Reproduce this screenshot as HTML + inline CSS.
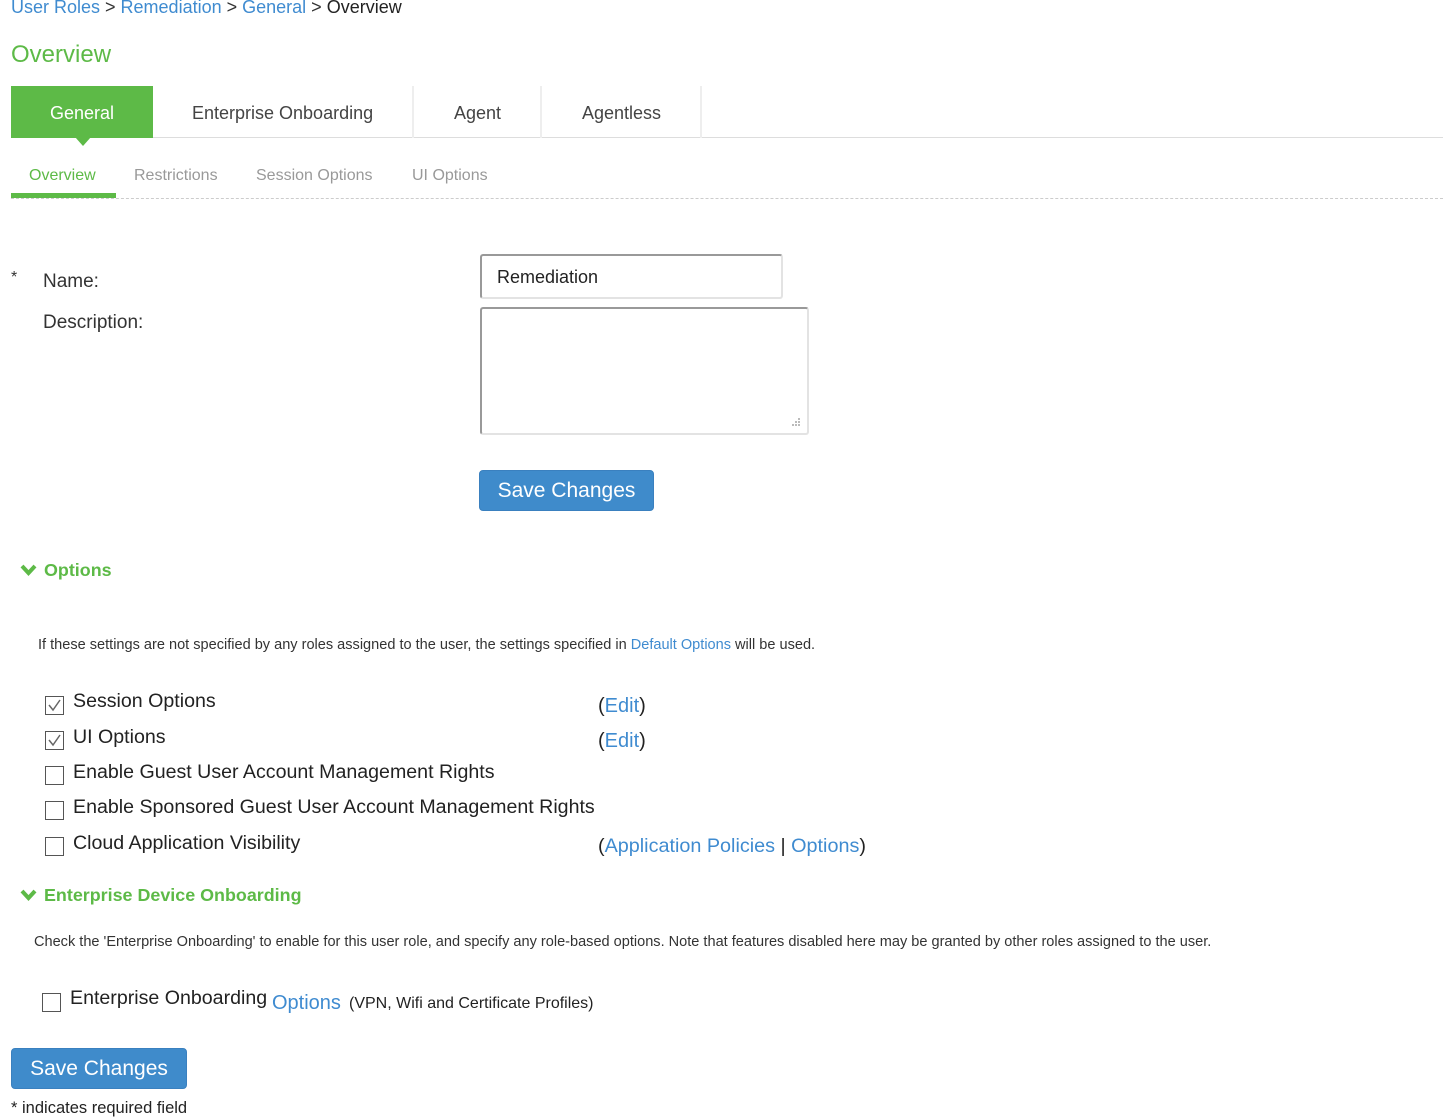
<!DOCTYPE html>
<html><head><meta charset="utf-8"><style>
*{margin:0;padding:0;box-sizing:border-box}
body{width:1443px;height:1115px;overflow:hidden;background:#fff;font-family:"Liberation Sans",Arial,sans-serif;color:#333;position:relative}
.a{position:absolute;white-space:nowrap;line-height:1}
.lk{color:#3f8bd0}
.g{color:#5dba47}
.cb{position:absolute;width:19px;height:19px;border:1.5px solid #555;background:#fff}
.cb svg{position:absolute;left:1px;top:1px}
.btn{position:absolute;background:#3f8bcb;border:1px solid #3a80bf;border-radius:4px;color:#fff;font-size:21px;text-align:center;line-height:40px}
</style></head><body>
<div class="a" style="left:11px;top:-2px;font-size:18px"><span class="lk">User Roles</span> &gt; <span class="lk">Remediation</span> &gt; <span class="lk">General</span> &gt; <span style="color:#222">Overview</span></div>
<div class="a g" style="left:11px;top:43px;font-size:24px">Overview</div>

<div style="position:absolute;left:11px;top:137px;width:1432px;height:1px;background:#ddd"></div>
<div style="position:absolute;left:11px;top:86px;width:142px;height:52px;background:#5dba47"></div>
<div style="position:absolute;left:75px;top:137px;width:0;height:0;border-left:8px solid transparent;border-right:8px solid transparent;border-top:9px solid #5dba47"></div>
<div style="position:absolute;left:412px;top:86px;width:2px;height:52px;background:#eee"></div>
<div style="position:absolute;left:540px;top:86px;width:2px;height:52px;background:#eee"></div>
<div style="position:absolute;left:700px;top:86px;width:2px;height:52px;background:#eee"></div>
<div class="a" style="left:50px;top:104px;font-size:18px;color:#fff">General</div>
<div class="a" style="left:192px;top:104px;font-size:18px;color:#444">Enterprise Onboarding</div>
<div class="a" style="left:454px;top:104px;font-size:18px;color:#444">Agent</div>
<div class="a" style="left:582px;top:104px;font-size:18px;color:#444">Agentless</div>

<div class="a g" style="left:29px;top:168px;font-size:16px">Overview</div>
<div class="a" style="left:134px;top:168px;font-size:16px;color:#999">Restrictions</div>
<div class="a" style="left:256px;top:168px;font-size:16px;color:#999">Session Options</div>
<div class="a" style="left:412px;top:168px;font-size:16px;color:#999">UI Options</div>
<div style="position:absolute;left:11px;top:198px;width:1432px;border-top:1px dashed #ccc"></div>
<div style="position:absolute;left:11px;top:193px;width:105px;height:5px;background:#5dba47"></div>

<div class="a" style="left:11px;top:270px;font-size:16px">*</div>
<div class="a" style="left:43px;top:272px;font-size:19px">Name:</div>
<div class="a" style="left:43px;top:313px;font-size:19px">Description:</div>
<div style="position:absolute;left:480px;top:254px;width:303px;height:45px;border:2px solid #e3e3e3;border-top-color:#999;border-left-color:#999;border-radius:3px"></div>
<div class="a" style="left:497px;top:268px;font-size:18px;color:#222">Remediation</div>
<div style="position:absolute;left:480px;top:307px;width:329px;height:128px;border:2px solid #e3e3e3;border-top-color:#999;border-left-color:#999;border-radius:3px"></div>
<svg style="position:absolute;left:789px;top:417px" width="14" height="12"><g fill="#bbb"><rect x="9" y="1" width="2" height="2"/><rect x="6" y="4" width="2" height="2"/><rect x="9" y="4" width="2" height="2"/><rect x="3" y="7" width="2" height="2"/><rect x="6" y="7" width="2" height="2"/><rect x="9" y="7" width="2" height="2"/></g></svg>
<div class="btn" style="left:479px;top:470px;width:175px;height:41px">Save Changes</div>

<svg style="position:absolute;left:20px;top:564px" width="17" height="13" viewBox="0 0 17 13"><path d="M2 2 L8.5 9 L15 2" fill="none" stroke="#5dba47" stroke-width="4"/></svg>
<div class="a g" style="left:44px;top:562px;font-size:17.9px;font-weight:bold">Options</div>
<div class="a" style="left:38px;top:638px;font-size:14.55px;color:#333">If these settings are not specified by any roles assigned to the user, the settings specified in <span class="lk">Default Options</span> will be used.</div>

<div class="cb" style="left:45px;top:696px"><svg width="15" height="15"><path d="M2 7 L6 12 L13 2" fill="none" stroke="#666" stroke-width="1.5"/></svg></div>
<div class="cb" style="left:45px;top:731px"><svg width="15" height="15"><path d="M2 7 L6 12 L13 2" fill="none" stroke="#666" stroke-width="1.5"/></svg></div>
<div class="cb" style="left:45px;top:766px"></div>
<div class="cb" style="left:45px;top:801px"></div>
<div class="cb" style="left:45px;top:837px"></div>
<div class="a" style="left:73px;top:692px;font-size:19.6px;color:#222">Session Options</div>
<div class="a" style="left:73px;top:728px;font-size:19.6px;color:#222">UI Options</div>
<div class="a" style="left:73px;top:763px;font-size:19.6px;color:#222">Enable Guest User Account Management Rights</div>
<div class="a" style="left:73px;top:798px;font-size:19.6px;color:#222">Enable Sponsored Guest User Account Management Rights</div>
<div class="a" style="left:73px;top:834px;font-size:19.6px;color:#222">Cloud Application Visibility</div>
<div class="a" style="left:598px;top:696px;font-size:20px;color:#222">(<span class="lk">Edit</span>)</div>
<div class="a" style="left:598px;top:731px;font-size:20px;color:#222">(<span class="lk">Edit</span>)</div>
<div class="a" style="left:598px;top:837px;font-size:19.8px;color:#222">(<span class="lk">Application Policies</span> | <span class="lk">Options</span>)</div>

<svg style="position:absolute;left:20px;top:889px" width="17" height="13" viewBox="0 0 17 13"><path d="M2 2 L8.5 9 L15 2" fill="none" stroke="#5dba47" stroke-width="4"/></svg>
<div class="a g" style="left:44px;top:887px;font-size:17.9px;font-weight:bold">Enterprise Device Onboarding</div>
<div class="a" style="left:34px;top:935px;font-size:14.55px;color:#333">Check the 'Enterprise Onboarding' to enable for this user role, and specify any role-based options. Note that features disabled here may be granted by other roles assigned to the user.</div>
<div class="cb" style="left:42px;top:993px"></div>
<div class="a" style="left:70px;top:989px;font-size:19.6px;color:#222">Enterprise Onboarding</div>
<div class="a lk" style="left:272px;top:993px;font-size:20px">Options</div>
<div class="a" style="left:349px;top:996px;font-size:16px;color:#222">(VPN, Wifi and Certificate Profiles)</div>
<div class="btn" style="left:11px;top:1048px;width:176px;height:41px">Save Changes</div>
<div class="a" style="left:11px;top:1100px;font-size:16.5px;color:#222">* indicates required field</div>
</body></html>
